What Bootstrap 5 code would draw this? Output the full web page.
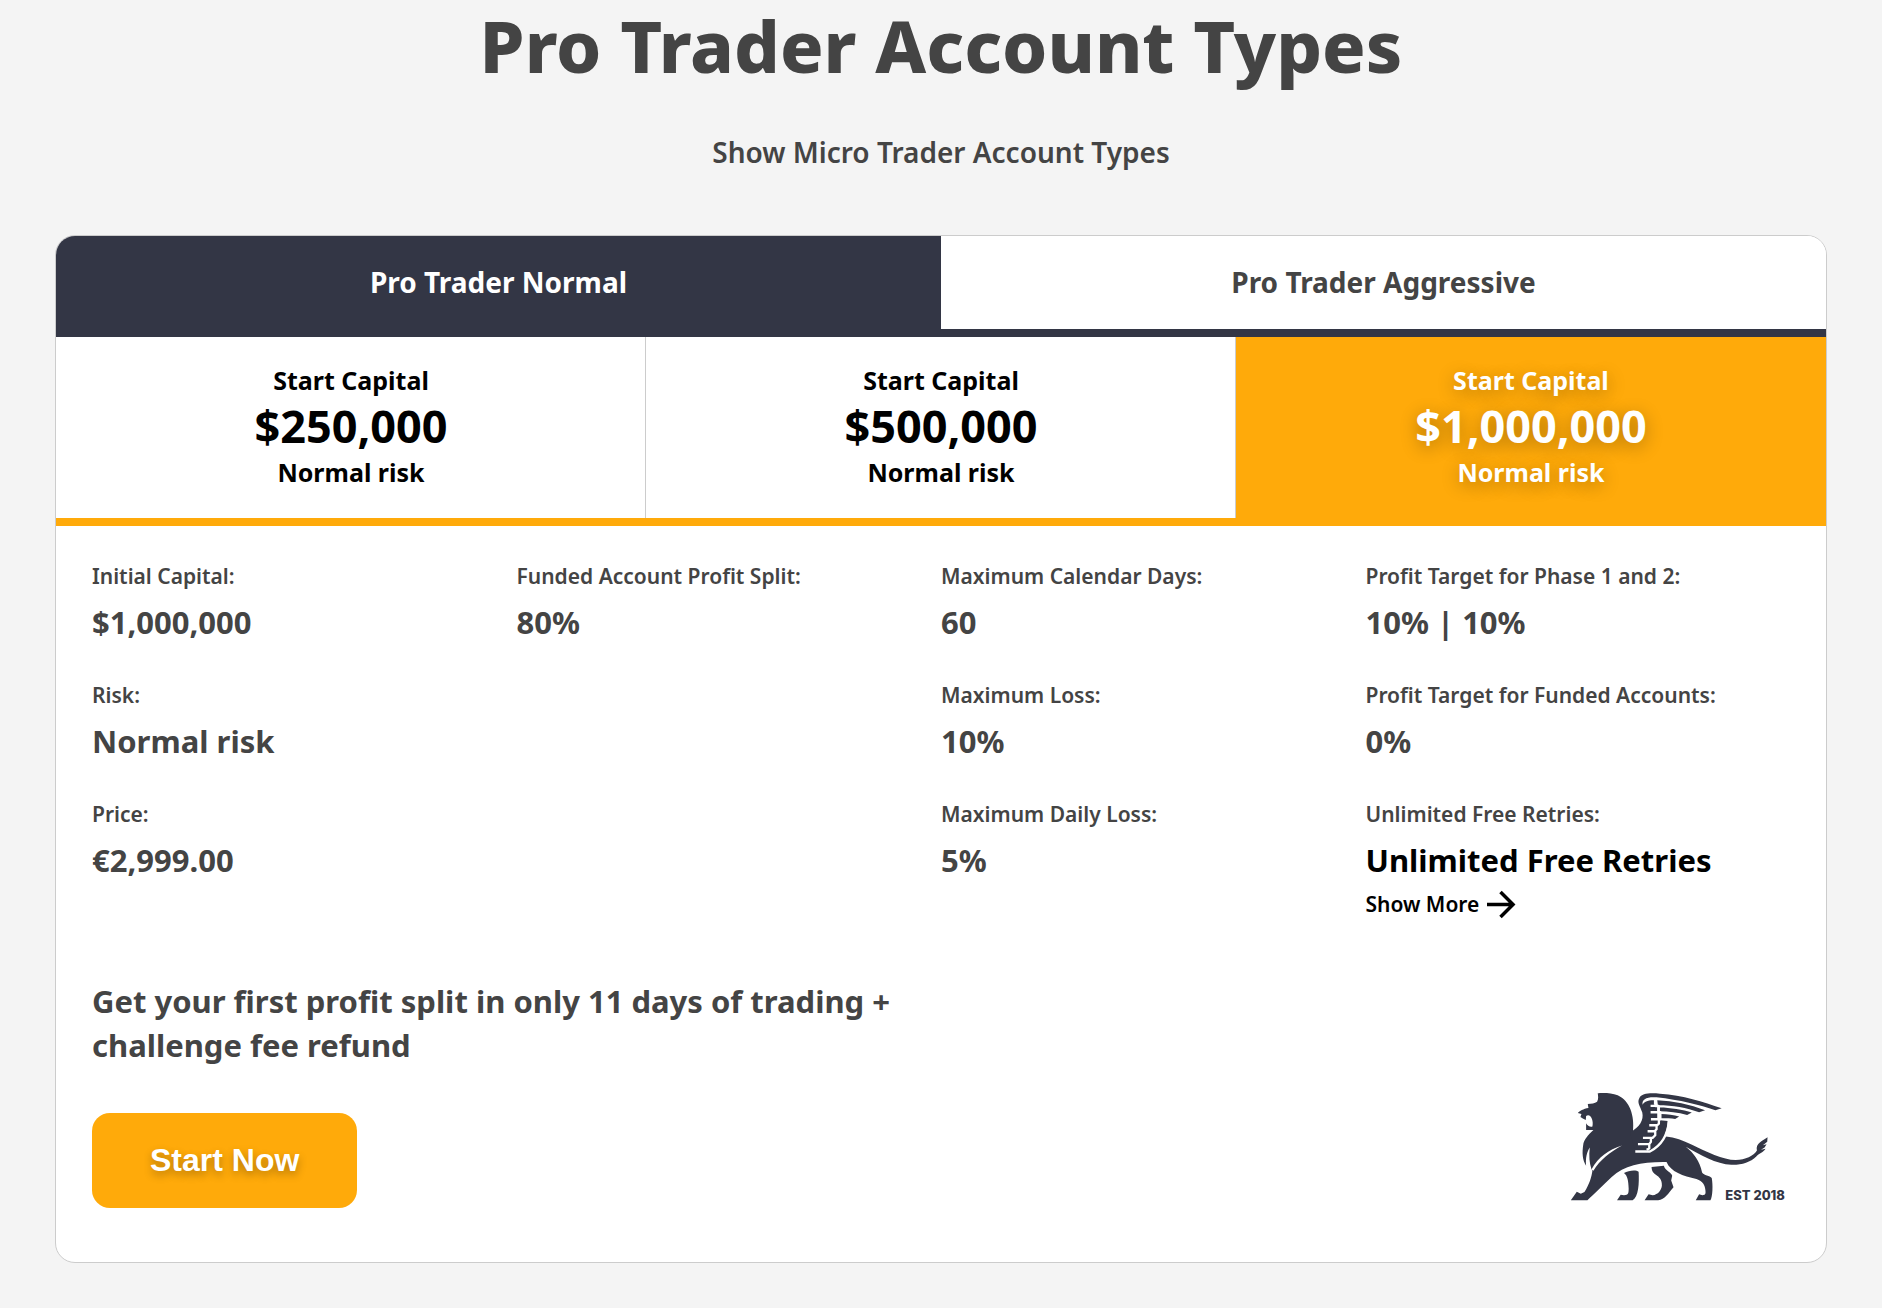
<!DOCTYPE html>
<html lang="en">
<head>
<meta charset="utf-8">
<meta name="viewport" content="width=device-width, initial-scale=1">
<title>Pro Trader Account Types</title>
<link href="https://cdn.jsdelivr.net/npm/bootstrap@5.3.0/dist/css/bootstrap.min.css" rel="stylesheet">
<style>
  :root { --ink: #444; --navy: #333645; --amber: #ffaa0a; --line: #ccc; }
  body { background: #f4f4f4; color: var(--ink); font-family: "Noto Sans", "Open Sans", sans-serif; }
  .page-title { font-size: 72px; line-height: 90px; font-weight: 800; margin: 0 0 41px; }
  .switch-link { color: var(--ink); font-size: 28px; line-height: 42px; font-weight: 600; }
  .page-wrap { padding: 0 55px 44px; }
  .plan-card { margin-top: 62px; border: 1px solid var(--line); border-radius: 20px; background: #fff; overflow: hidden; }
  .plan-tab { border: 0; border-bottom: 8px solid var(--navy); background: #fff; color: var(--ink); font-size: 28px; line-height: 41px; font-weight: 700; padding: 26px 0; }
  .plan-tab.active { background: var(--navy); color: #fff; }
  .size-tab { border: 0; border-bottom: 8px solid var(--amber); background: #fff; color: #000; font-size: 25px; line-height: 36px; font-weight: 700; padding: 25px 0 28px; }
  .size-tab:not(.active) { box-shadow: inset -1px 0 var(--line); }
  .size-tab.active { background: var(--amber); color: #fff; text-shadow: 0 4px 18px rgba(0, 0, 0, .32); }
  .size-amount { font-size: 45px; line-height: 56px; }
  .plan-body { padding: 34px 36px 54px; }
  .facts { row-gap: 35px; }
  .fact-name { font-size: 21px; line-height: 32px; font-weight: 600; margin-bottom: 8px; }
  .fact-value { font-size: 31px; line-height: 44px; font-weight: 700; margin: 0; }
  .more-link { font-size: 21px; line-height: 44px; font-weight: 600; color: #000; }
  .promo { font-size: 31px; line-height: 44px; font-weight: 700; margin: 53px 0 46px; }
  .start-btn { --bs-btn-color: #fff; --bs-btn-bg: var(--amber); --bs-btn-hover-color: #fff; --bs-btn-hover-bg: #f09d00; --bs-btn-border-width: 0; --bs-btn-border-radius: 18px;
    font: 700 32px/39px "Liberation Sans", Arial, sans-serif; padding: 28px 58px; text-shadow: 0 4px 8px rgba(0, 0, 0, .3); }
  .lion-logo { margin: 0 5px 7px 0; overflow: visible; }
  .promo { margin-bottom: 25px; }
</style>
<script src="https://cdn.jsdelivr.net/npm/bootstrap@5.3.0/dist/js/bootstrap.bundle.min.js"></script>
</head>
<body>
<main class="page-wrap">
  <header class="text-center">
    <h1 class="page-title">Pro Trader Account Types</h1>
    <a href="#" class="switch-link d-block text-decoration-none">Show Micro Trader Account Types</a>
  </header>

  <section class="plan-card">
    <div class="d-flex" role="tablist">
      <button type="button" class="plan-tab active w-50" role="tab" aria-selected="true">Pro Trader Normal</button>
      <button type="button" class="plan-tab w-50" role="tab" aria-selected="false">Pro Trader Aggressive</button>
    </div>
    <div class="row g-0" role="tablist">
      <button type="button" class="size-tab col-4" role="tab" aria-selected="false">
        <span class="d-block">Start Capital</span><span class="size-amount d-block">$250,000</span><span class="d-block">Normal risk</span>
      </button>
      <button type="button" class="size-tab col-4" role="tab" aria-selected="false">
        <span class="d-block">Start Capital</span><span class="size-amount d-block">$500,000</span><span class="d-block">Normal risk</span>
      </button>
      <button type="button" class="size-tab active col-4" role="tab" aria-selected="true">
        <span class="d-block">Start Capital</span><span class="size-amount d-block">$1,000,000</span><span class="d-block">Normal risk</span>
      </button>
    </div>

    <div class="plan-body">
      <dl class="facts row gx-0 mb-0">
        <div class="col-3"><dt class="fact-name">Initial Capital:</dt><dd class="fact-value">$1,000,000</dd></div>
        <div class="col-3"><dt class="fact-name">Funded Account Profit Split:</dt><dd class="fact-value">80%</dd></div>
        <div class="col-3"><dt class="fact-name">Maximum Calendar Days:</dt><dd class="fact-value">60</dd></div>
        <div class="col-3"><dt class="fact-name">Profit Target for Phase 1 and 2:</dt><dd class="fact-value">10% | 10%</dd></div>

        <div class="col-3"><dt class="fact-name">Risk:</dt><dd class="fact-value">Normal risk</dd></div>
        <div class="col-3 offset-3"><dt class="fact-name">Maximum Loss:</dt><dd class="fact-value">10%</dd></div>
        <div class="col-3"><dt class="fact-name">Profit Target for Funded Accounts:</dt><dd class="fact-value">0%</dd></div>

        <div class="col-3"><dt class="fact-name">Price:</dt><dd class="fact-value">€2,999.00</dd></div>
        <div class="col-3 offset-3"><dt class="fact-name">Maximum Daily Loss:</dt><dd class="fact-value">5%</dd></div>
        <div class="col-3">
          <dt class="fact-name">Unlimited Free Retries:</dt>
          <dd class="fact-value text-black">Unlimited Free Retries</dd>
          <dd class="mb-0">
            <a href="#" class="more-link d-flex align-items-center gap-2 text-decoration-none">Show More
              <svg width="29" height="29" viewBox="0 0 29 29" fill="none" stroke="#000" stroke-width="3.500" aria-hidden="true"><path d="M0 14.500H25M13.500 2L26 14.500L13.500 27"/></svg>
            </a>
          </dd>
        </div>
      </dl>

      <div class="row gx-0"><p class="promo col-6">Get your first profit split in only 11 days of trading + challenge fee refund</p></div>

      <div class="d-flex justify-content-between align-items-end">
        <button type="button" class="btn start-btn">Start Now</button>
        <svg class="lion-logo" width="215" height="109" viewBox="60 66 646 328" role="img" aria-label="Winged lion, established 2018">
          <g fill="#333645">
            <!-- head, mane, body, front and hind leg, tail -->
            <path d="M143 70C150 69 182 67 203 76C240 93 254 138 249 185L300 190L348 200C375 203 400 212 425 224C470 246 520 270 558 271C588 270 612 258 622 242C617 220 640 212 654 202L653 216L640 226L651 223L645 233L634 240L648 237C641 248 630 250 620 260C602 278 575 286 545 285C500 284 450 255 408 231C432 250 450 275 457 308C462 318 481 316 486 325C490 345 489 382 482 392H438L448 374L458 377C468 376 468 372 467 362C465 345 460 336 440 328C400 320 362 306 350 277C275 276 225 286 185 322C152 354 130 375 112 392H62L80 366L92 372L103 367C118 344 124 322 127 303L124 298C118 280 116 258 119 233C110 247 106 264 108 288C97 270 95 250 100 220C104 208 112 196 130 180L108 180L108 160C112 168 120 172 127 170C131 152 122 130 108 138L107 150L98 146L91 141L94 132L83 129C88 124 100 116 115 114L113 102C124 101 134 100 141 95C146 87 144 78 143 70Z"/>
            <!-- wing root and leading edge -->
            <path d="M240 188C270 172 282 150 277 128C270 108 261 98 268 85C275 69 300 69 330 71C400 76 460 95 516 115L497 121C450 105 390 90 320 82C290 80 275 88 278 104C284 96 290 91 312 91V104H316V112H322V150L354 153C352 195 332 225 300 243H256Z"/>
            <path d="M322 91C370 93 420 104 466 121L448 127C410 114 370 106 324 106Z"/>
            <path d="M330 113C360 113 400 120 426 128L412 135C385 128 355 124 330 124Z"/>
            <path d="M334 132C352 132 372 135 388 140L376 147C364 145 350 145 334 145Z"/>
            <!-- far legs -->
            <path d="M222 310C235 302 258 299 266 306C268 340 266 382 248 392H201L212 375L222 377C236 377 236 370 236 356C235 335 233 318 222 310Z"/>
            <path d="M305 292L342 288C345 302 367 310 367 318L364 332L371 353C355 372 345 390 325 392H284L296 374L308 377C325 374 334 362 336 348C337 330 328 322 318 315C308 310 305 300 305 292Z"/>
          </g>
          <g fill="none" stroke="#fff" stroke-width="7" stroke-linejoin="round">
            <!-- feather steps -->
            <path d="M313 90H318V108H302M318 108H326V127H302M326 127H331V148H303M327 148V161L322 166H298M320 166V178L314 184H293M316 184V196L308 204H279M303 204V216L298 223H264M298 223V236L290 240"/>
            <!-- gap between wing and back -->
            <path d="M357 152C354 195 336 226 300 245H256"/>
          </g>
          <path fill="#fff" d="M124 299C145 262 175 240 216 227C180 247 150 270 130 303Z"/>
          <text x="527" y="390" font-family="Inter, sans-serif" font-size="39" font-weight="800" fill="#333645">EST 2018</text>
        </svg>
      </div>
    </div>
  </section>
</main>
</body>
</html>
